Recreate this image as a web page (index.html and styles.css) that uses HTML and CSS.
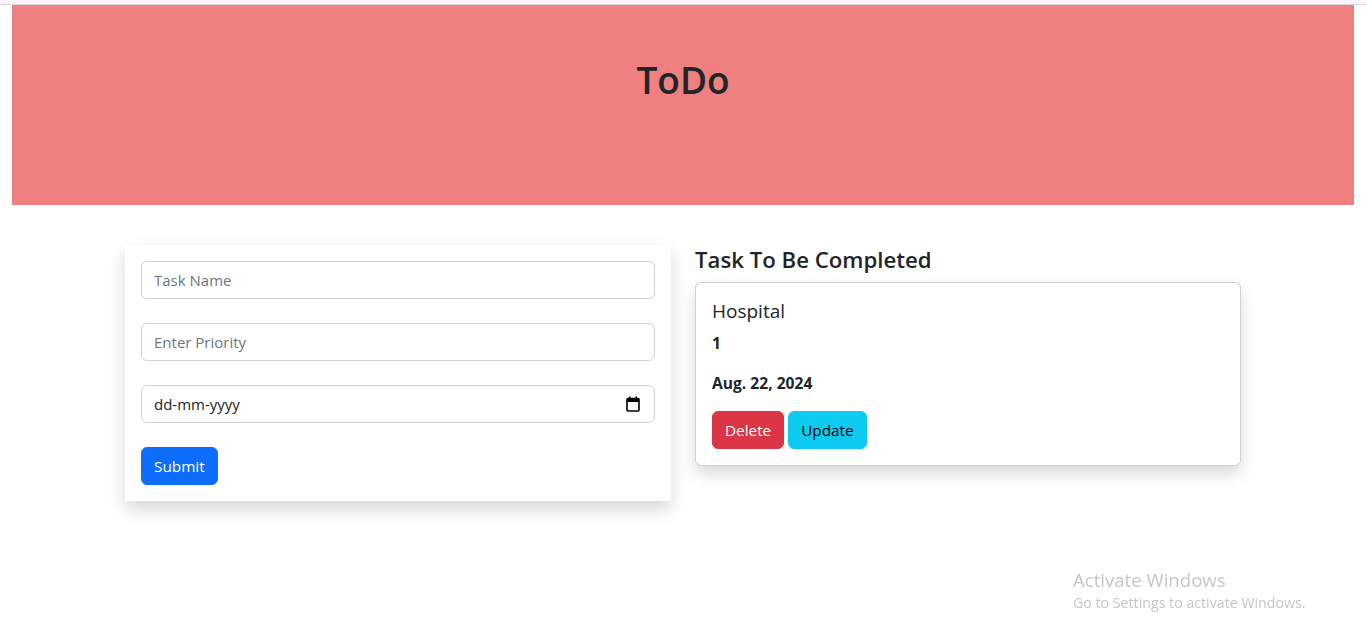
FILE: index.html
```html
<!DOCTYPE html>
<html lang="en">
<head>
<meta charset="utf-8">
<title>ToDo</title>
<link rel="stylesheet" href="styles.css">
</head>
<body>
<div class="topstrip"></div>
<header class="hero">
  <h1 class="hero-title">ToDo</h1>
</header>
<main class="container">
  <div class="row">
    <div class="col">
      <form class="form-card">
        <input class="form-control" type="text" placeholder="Task Name">
        <input class="form-control" type="text" placeholder="Enter Priority">
        <div class="form-control date-control">
          <span>dd-mm-yyyy</span>
          <svg class="cal-icon" width="14" height="16" viewBox="0 0 14 16" aria-hidden="true">
            <rect x="1" y="2.5" width="12" height="12.5" rx="1" fill="none" stroke="#000" stroke-width="1.6"/>
            <rect x="1" y="2.5" width="12" height="3.5" fill="#000"/>
            <rect x="3" y="0.5" width="1.6" height="3" fill="#000"/>
            <rect x="9.4" y="0.5" width="1.6" height="3" fill="#000"/>
          </svg>
        </div>
        <button class="btn btn-primary" type="button">Submit</button>
      </form>
    </div>
    <div class="col">
      <h4 class="list-title">Task To Be Completed</h4>
      <div class="task-card">
        <h5 class="task-name">Hospital</h5>
        <p class="task-meta">1</p>
        <p class="task-meta">Aug. 22, 2024</p>
        <div class="task-actions">
          <button class="btn btn-danger" type="button">Delete</button>
          <button class="btn btn-info" type="button">Update</button>
        </div>
      </div>
    </div>
  </div>
</main>
<div class="watermark">
  <div class="wm-title">Activate Windows</div>
  <div class="wm-sub">Go to Settings to activate Windows.</div>
</div>
</body>
</html>
```

FILE: styles.css
```css
* { box-sizing: border-box; }
html, body { margin: 0; padding: 0; }
body {
  min-height: 100vh;
  font-family: "Open Sans", "Noto Sans", "Liberation Sans", sans-serif;
  font-size: 16px;
  line-height: 1.5;
  color: #212529;
  background: #fff;
}
.topstrip {
  height: 5px;
  background: #fdf4fc;
  border-bottom: 1px solid #ddd6dd;
}
.hero {
  margin: 0 12px;
  height: 200px;
  background: #f08080;
  padding-top: 53px;
}
.hero-title {
  margin: 0;
  text-align: center;
  font-size: 37px;
  font-weight: 600;
  line-height: 1.2;
}
.container {
  width: 1140px;
  margin: 40px auto 0;
  padding: 0 12px 60px;
}
.row {
  display: flex;
  gap: 24px;
  align-items: flex-start;
}
.col { flex: 1 1 0; min-width: 0; }
.form-card {
  background: #fff;
  padding: 16px;
  box-shadow: 0 8px 16px rgba(0,0,0,.16);
  display: flex;
  flex-direction: column;
  align-items: flex-start;
  gap: 24px;
}
.form-control {
  display: block;
  width: 100%;
  height: 38px;
  padding: 6px 12px;
  font: inherit;
  font-size: 15px;
  color: #212529;
  background: #fff;
  border: 1px solid #ced4da;
  border-radius: 6px;
  outline: none;
}
.form-control::placeholder { color: #6c757d; }
.date-control {
  display: flex;
  align-items: center;
  justify-content: space-between;
  padding-right: 14px;
}
.cal-icon { display: block; }
.btn {
  display: inline-block;
  height: 38px;
  padding: 6px 12px;
  font: inherit;
  font-size: 15.3px;
  line-height: 24px;
  border: 1px solid transparent;
  border-radius: 6px;
  cursor: pointer;
}
.btn-primary { background: #0d6efd; color: #fff; border-color: #0d6efd; }
.btn-danger { background: #dc3545; color: #fff; border-color: #dc3545; }
.btn-info { background: #0dcaf0; color: #000; border-color: #0dcaf0; }
.list-title {
  margin: 0 0 8px;
  font-size: 22.2px;
  font-weight: 600;
  line-height: 29px;
}
.task-card {
  background: #fff;
  border: 1px solid rgba(0,0,0,.175);
  border-radius: 6px;
  padding: 16px;
  box-shadow: 0 8px 16px rgba(0,0,0,.15);
}
.task-name {
  margin: 0 0 8px;
  font-size: 19px;
  font-weight: 500;
  line-height: 24px;
}
.task-meta {
  margin: 0 0 16px;
  font-weight: 700;
  font-size: 15.6px;
  line-height: 24px;
}
.task-actions { display: flex; gap: 4px; }
.watermark {
  position: fixed;
  left: 1073px;
  top: 568px;
  color: #c6c6c6;
  font-family: "Open Sans", "Noto Sans", sans-serif;
  pointer-events: none;
}
.wm-title { font-size: 18.6px; line-height: 24px; }
.wm-sub { font-size: 14.2px; line-height: 22px; }
```
